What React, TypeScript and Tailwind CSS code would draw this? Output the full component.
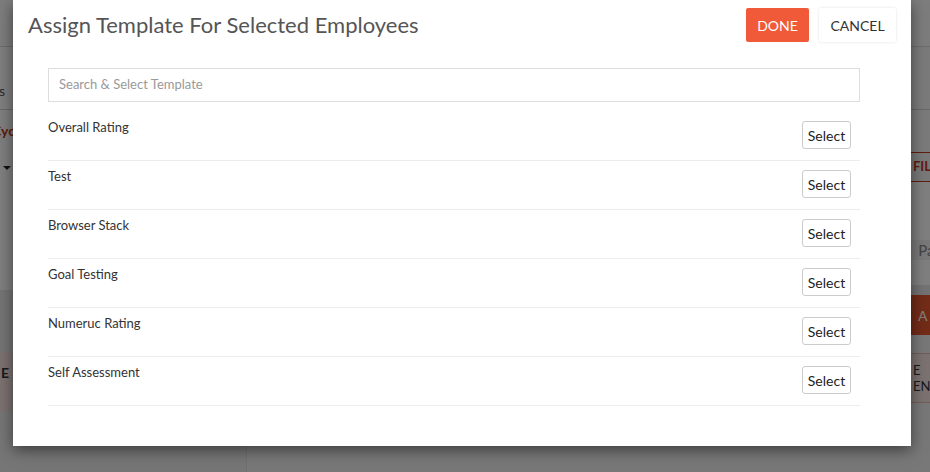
import React from 'react';

const templates = [
  'Overall Rating',
  'Test',
  'Browser Stack',
  'Goal Testing',
  'Numeruc Rating',
  'Self Assessment',
];

function BackgroundPage() {
  return (
    <div className="flex h-full w-full flex-col bg-[#f2f2f2]">
      <div className="h-[47px] border-b border-[#d8d8d8] bg-[#fafafa]" />
      <div className="flex flex-1">
        <div className="flex w-[247px] flex-col border-r border-[#e0e0e0]">
          <div className="flex h-[63px] items-end justify-end border-b border-[#d0d0d0] bg-white pb-[8px] pr-[241px] text-[14px] text-[#555]">
            s
          </div>
          <div className="flex h-[40px] items-center justify-end bg-white pr-[220px] text-[14px] font-bold text-[#c0391b]">
            Cycle
          </div>
          <div className="h-[10px] bg-white" />
          <div className="flex h-[16px] items-center bg-white pl-[3px]">
            <span className="h-0 w-0 border-x-[4px] border-t-[4px] border-x-transparent border-t-[#222]" />
          </div>
          <div className="h-[114px] bg-white" />
          <div className="h-[62px] bg-[#eaeaea]" />
          <div className="flex h-[60px] items-start bg-[#f6e4e2] pl-[1px] pt-[10px] text-[14px] font-bold text-[#333]">
            E <span className="ml-1 text-[#3b6fb0]">-</span>
          </div>
          <div className="flex-1 bg-[#ececec]" />
        </div>
        <div className="flex flex-1 flex-col">
          <div className="h-[63px] border-b border-[#d0d0d0] bg-[#f6f6f6]" />
          <div className="h-[42px] bg-[#f6f6f6]" />
          <div className="ml-auto mr-[-40px] flex h-[30px] w-[60px] items-center border-y border-[#c0391b] pl-[3px] text-[13px] font-bold text-[#c0391b]">
            FIL
          </div>
          <div className="h-[58px] bg-white" />
          <div className="ml-auto mr-[-20px] h-[20px] text-[15px] leading-[20px] text-[#888]">Page</div>
          <div className="h-[25px] bg-white" />
          <div className="h-[10px] bg-[#e6e6e6]" />
          <div className="ml-auto mr-[-40px] flex h-[40px] w-[60px] items-center bg-[#e4582f] pl-[8px] text-[14px] text-white">
            A
          </div>
          <div className="h-[18px] bg-[#f0f0f0]" />
          <div className="ml-auto mr-[-40px] flex h-[50px] w-[60px] flex-col justify-center border border-[#e7b9b0] bg-[#f6e4e2] pl-[2px] text-[13px] leading-[16px] text-[#333]">
            <span>E</span>
            <span>ENT</span>
          </div>
          <div className="flex-1 bg-[#f0f0f0]" />
        </div>
      </div>
    </div>
  );
}

function TemplateRow({ name }: { name: string }) {
  return (
    <div className="flex h-[49px] items-start justify-between border-b border-[#ececec] pt-[6px] pr-[9px]">
      <span className="text-[13px] leading-[18px] text-[#333]">{name}</span>
      <button className="mt-[3px] h-[28px] w-[49px] rounded-[3px] border border-[#cccccc] bg-white text-[14px] text-[#222]">
        Select
      </button>
    </div>
  );
}

export default function App() {
  return (
    <div
      className="relative h-[472px] w-[930px] overflow-hidden"
      style={{ fontFamily: 'Lato, "Open Sans", sans-serif' }}
    >
      <BackgroundPage />
      <div className="absolute inset-0 bg-black/50" />
      <div className="absolute left-[13px] top-0 flex h-[446px] w-[898px] flex-col bg-white shadow-[0_4px_14px_rgba(0,0,0,0.5)]">
        <div className="flex h-[50px] items-start justify-between pl-[15px] pr-[15px] pt-[8px]">
          <h1 className="mt-[3px] text-[22px] leading-[28px] text-[#555]">
            Assign Template For Selected Employees
          </h1>
          <div className="flex gap-[10px]">
            <button className="h-[34px] w-[63px] rounded-[2px] bg-[#f05a38] text-[14px] text-white">
              DONE
            </button>
            <button className="h-[34px] w-[77px] rounded-[2px] bg-white text-[14px] text-[#333] shadow-[0_0_3px_rgba(0,0,0,0.12)]">
              CANCEL
            </button>
          </div>
        </div>
        <div className="flex flex-col pl-[35px] pr-[51px] pt-[18px]">
          <div className="flex h-[34px] items-center border border-[#dddddd] px-[10px] text-[13px] text-[#999]">
            Search &amp; Select Template
          </div>
          <div className="mt-[10px] flex flex-col">
            {templates.map((t) => (
              <TemplateRow key={t} name={t} />
            ))}
          </div>
        </div>
      </div>
    </div>
  );
}
